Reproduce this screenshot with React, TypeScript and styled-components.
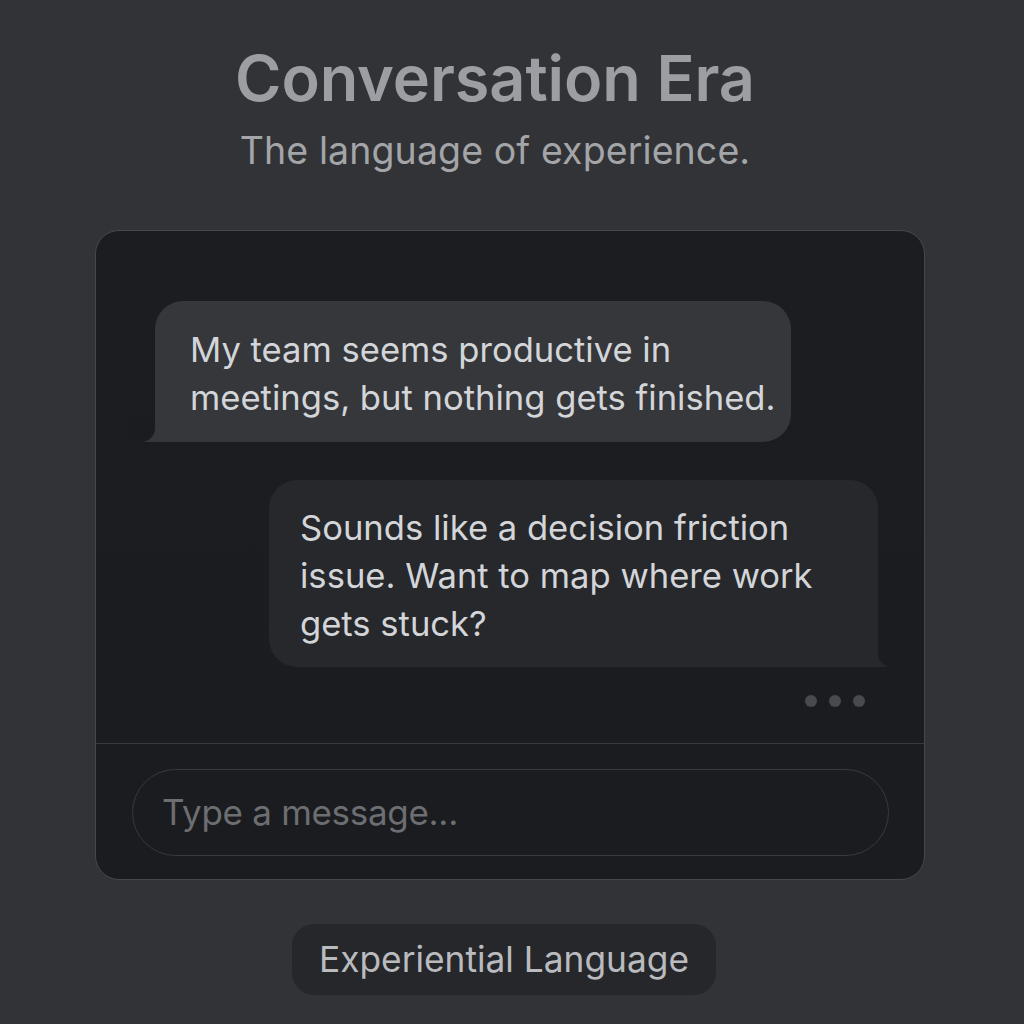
import { createGlobalStyle, styled } from "styled-components";

const GlobalStyle = createGlobalStyle`
  html, body {
    margin: 0;
    padding: 0;
    background: #323336;
  }
  body {
    font-family: Inter, "Noto Sans", "Liberation Sans", sans-serif;
    -webkit-font-smoothing: antialiased;
  }
  * { box-sizing: border-box; }
`;

const Page = styled.div`
  width: 1024px;
  height: 1024px;
  padding: 46px 0 0 95px;
  display: flex;
  flex-direction: column;
  background: #323336;
`;

const Header = styled.header`
  width: 830px;
  padding-right: 30px;
  display: flex;
  flex-direction: column;
  align-items: center;
`;

const Title = styled.h1`
  margin: 0;
  font-size: 63px;
  line-height: 64px;
  font-weight: 600;
  letter-spacing: -0.1px;
  color: #9c9ea3;
`;

const Subtitle = styled.p`
  margin: 18px 0 0;
  font-size: 37.5px;
  line-height: 46px;
  font-weight: 400;
  letter-spacing: 0.1px;
  color: #a3a5a9;
`;

const ChatCard = styled.section`
  width: 830px;
  height: 650px;
  margin-top: 56px;
  border: 1px solid #46474b;
  border-radius: 24px;
  background: linear-gradient(180deg, #1c1d20 0%, #1b1c1f 100%);
  display: flex;
  flex-direction: column;
  overflow: hidden;
`;

const Messages = styled.div`
  height: 512px;
  flex-shrink: 0;
  padding: 70px 46px 0 59px;
  display: flex;
  flex-direction: column;
`;

const Bubble = styled.div<{ $side: "left" | "right"; $width: number }>`
  position: relative;
  width: ${(p) => p.$width}px;
  align-self: ${(p) => (p.$side === "left" ? "flex-start" : "flex-end")};
  padding: ${(p) => (p.$side === "left" ? "24px 10px 21px 35px" : "23px 20px 20px 31px")};
  margin-bottom: 38px;
  border-radius: ${(p) => (p.$side === "left" ? "28px 28px 28px 0" : "28px 28px 0 28px")};
  background: ${(p) => (p.$side === "left" ? "#35373b" : "#26282b")};
  color: #d3d5d9;
  font-size: 34.6px;
  line-height: 48px;
  letter-spacing: 0;

  &::before {
    content: "";
    position: absolute;
    bottom: 0;
    ${(p) => (p.$side === "left" ? "left: -12px;" : "right: -12px;")}
    width: 24px;
    height: 26px;
    background: ${(p) => (p.$side === "left" ? "#35373b" : "#26282b")};
  }

  &::after {
    content: "";
    position: absolute;
    bottom: 0;
    ${(p) => (p.$side === "left" ? "left: -24px;" : "right: -24px;")}
    width: 24px;
    height: 28px;
    background: #1b1c1f;
    ${(p) =>
      p.$side === "left"
        ? "border-bottom-right-radius: 14px;"
        : "border-bottom-left-radius: 14px;"}
  }
`;

const Typing = styled.div`
  align-self: flex-end;
  margin: -10px 13px 0 0;
  display: flex;
  gap: 12px;
`;

const Dot = styled.span`
  width: 12px;
  height: 12px;
  border-radius: 50%;
  background: #494a4e;
`;

const Composer = styled.div`
  flex: 1;
  border-top: 1px solid #38393c;
  padding: 25px 35px 0 36px;
`;

const InputPill = styled.div`
  height: 87px;
  border: 1.5px solid #393a3e;
  border-radius: 44px;
  background: #1b1c1f;
  display: flex;
  align-items: center;
  padding: 0 0 2px 29px;
`;

const Placeholder = styled.span`
  font-size: 35px;
  letter-spacing: -0.3px;
  color: #6c6e72;
`;

const BadgeRow = styled.div`
  width: 830px;
  padding-right: 12px;
  margin-top: 44px;
  display: flex;
  justify-content: center;
`;

const Badge = styled.div`
  height: 71px;
  padding: 0 27px;
  border-radius: 22px;
  background: #26272a;
  display: flex;
  align-items: center;
  font-size: 35.3px;
  letter-spacing: 0;
  color: #b9bbbf;
`;

export default function App() {
  return (
    <>
      <GlobalStyle />
      <Page>
        <Header>
          <Title>Conversation Era</Title>
          <Subtitle>The language of experience.</Subtitle>
        </Header>

        <ChatCard>
          <Messages>
            <Bubble $side="left" $width={636}>
              My team seems productive in meetings, but nothing gets finished.
            </Bubble>
            <Bubble $side="right" $width={609}>
              Sounds like a decision friction issue. Want to map where work gets stuck?
            </Bubble>
            <Typing>
              <Dot />
              <Dot />
              <Dot />
            </Typing>
          </Messages>
          <Composer>
            <InputPill>
              <Placeholder>Type a message...</Placeholder>
            </InputPill>
          </Composer>
        </ChatCard>

        <BadgeRow>
          <Badge>Experiential Language</Badge>
        </BadgeRow>
      </Page>
    </>
  );
}
